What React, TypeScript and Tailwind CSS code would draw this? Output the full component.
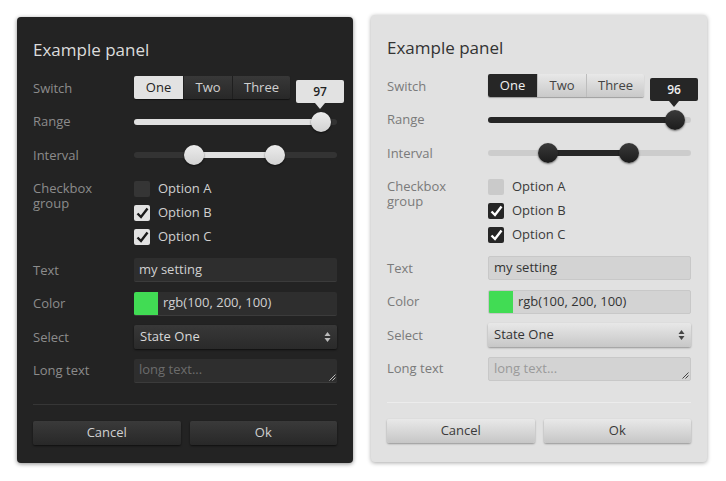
import React from "react";

type Mode = "dark" | "light";

const T = {
  dark: {
    panel: "mt-[17px] h-[446px] bg-[#232323] shadow-[0_1px_4px_rgba(0,0,0,0.45)]",
    title: "text-[#dcdcdc]",
    label: "text-[#8c8c8c]",
    text: "text-[#d0d0d0]",
    segOn: "bg-[#e2e2e2] text-[#222]",
    segOff: "bg-gradient-to-b from-[#383838] to-[#282828] text-[#d0d0d0] border-l border-[#1f1f1f]",
    segWrap: "shadow-[0_1px_1px_rgba(0,0,0,0.5)]",
    tip: "bg-[#e2e2e2] text-[#222]",
    tipArrow: "border-t-[#e2e2e2]",
    trackOff: "bg-[#333333]",
    trackOn: "bg-[#e0e0e0]",
    thumb: "bg-gradient-to-b from-[#ececec] to-[#d2d2d2] shadow-[0_1px_2px_rgba(0,0,0,0.6)]",
    boxOff: "bg-[#353535]",
    boxOn: "bg-[#e2e2e2]",
    check: "#1a1a1a",
    input: "bg-[#2e2e2e] border-b border-[#3b3b3b] text-[#d0d0d0]",
    placeholder: "text-[#6c6c6c]",
    select: "bg-gradient-to-b from-[#383838] to-[#2a2a2a] text-[#d8d8d8] shadow-[0_1px_2px_rgba(0,0,0,0.6)]",
    arrow: "#bbbbbb",
    grip: "#bbbbbb",
    divider: "bg-[#363636]",
    button: "bg-gradient-to-b from-[#3a3a3a] to-[#282828] text-[#d0d0d0] shadow-[0_1px_2px_rgba(0,0,0,0.6)]",
  },
  light: {
    panel: "mt-[15px] h-[447px] bg-[#e1e1e1] shadow-[0_1px_4px_rgba(0,0,0,0.35)]",
    title: "text-[#333]",
    label: "text-[#7a7a7a]",
    text: "text-[#3a3a3a]",
    segOn: "bg-[#262626] text-[#f0f0f0]",
    segOff: "bg-gradient-to-b from-[#e8e8e8] to-[#c9c9c9] text-[#444] border-l border-[#bdbdbd]",
    segWrap: "shadow-[0_1px_1px_rgba(0,0,0,0.3)]",
    tip: "bg-[#262626] text-[#f0f0f0]",
    tipArrow: "border-t-[#262626]",
    trackOff: "bg-[#cccccc]",
    trackOn: "bg-[#262626]",
    thumb: "bg-gradient-to-b from-[#3a3a3a] to-[#1c1c1c] shadow-[0_1px_2px_rgba(0,0,0,0.5)]",
    boxOff: "bg-[#cacaca]",
    boxOn: "bg-[#262626]",
    check: "#ffffff",
    input: "bg-[#d3d3d3] border border-[#c8c8c8] text-[#333]",
    placeholder: "text-[#9a9a9a]",
    select: "bg-gradient-to-b from-[#e8e8e8] to-[#c7c7c7] text-[#333] shadow-[0_1px_2px_rgba(0,0,0,0.35)]",
    arrow: "#444444",
    grip: "#444444",
    divider: "bg-[#d0d0d0] border-b border-[#ececec]",
    button: "bg-gradient-to-b from-[#e9e9e9] to-[#c6c6c6] text-[#3a3a3a] shadow-[0_1px_2px_rgba(0,0,0,0.35)]",
  },
};

function Row({ label, cls, children, top }: { label: string; cls: string; children: React.ReactNode; top?: boolean }) {
  return (
    <div className={"flex " + (top ? "items-start" : "items-center")}>
      <div className={"w-[101px] shrink-0 text-[13px] leading-[15px] " + cls + (top ? " pt-[4px] pr-[30px]" : "")}>{label}</div>
      <div className="w-[203px]">{children}</div>
    </div>
  );
}

function Check({ on, mode }: { on: boolean; mode: Mode }) {
  const t = T[mode];
  return (
    <div className={"flex h-4 w-4 items-center justify-center rounded-[2px] " + (on ? t.boxOn : t.boxOff)}>
      {on && (
        <svg width="13" height="12" viewBox="0 0 13 12">
          <path d="M1.5 6.5 L5 10 L11.5 1.5" fill="none" stroke={t.check} strokeWidth="2.4" strokeLinejoin="miter" />
        </svg>
      )}
    </div>
  );
}

function Panel({ mode, value }: { mode: Mode; value: number }) {
  const t = T[mode];
  const pos = 187; // thumb centre along the 203px track
  return (
    <div className={"flex w-[336px] flex-col rounded-[4px] px-4 " + t.panel}>
      <div className={"pt-[21px] text-[17px] leading-6 " + t.title}>Example panel</div>

      <div className="mt-[14px] flex flex-col gap-[9.5px]">
        <Row label="Switch" cls={t.label}>
          <div className="relative h-6">
            <div className={"flex h-[23px] w-[156px] overflow-hidden rounded-[2px] text-[13px] " + t.segWrap}>
              <div className={"flex w-[49px] items-center justify-center " + t.segOn}>One</div>
              <div className={"flex w-[49px] items-center justify-center " + t.segOff}>Two</div>
              <div className={"flex w-[58px] items-center justify-center " + t.segOff}>Three</div>
            </div>
            <div className="absolute left-[162px] top-[4px] flex flex-col items-center">
              <div className={"flex h-[23px] w-[48px] items-center justify-center rounded-[2px] text-[12px] font-semibold " + t.tip}>
                {value}
              </div>
              <div className={"h-0 w-0 border-x-[5px] border-t-[6px] border-x-transparent " + t.tipArrow} />
            </div>
          </div>
        </Row>

        <Row label="Range" cls={t.label}>
          <div className="relative h-6">
            <div className={"absolute left-0 right-0 top-[9px] h-[6px] rounded-full " + t.trackOff} />
            <div className={"absolute left-0 top-[9px] h-[6px] rounded-full " + t.trackOn} style={{ width: pos }} />
            <div className={"absolute top-[2px] h-5 w-5 rounded-full " + t.thumb} style={{ left: pos - 10 }} />
          </div>
        </Row>

        <Row label="Interval" cls={t.label}>
          <div className="relative h-6">
            <div className={"absolute left-0 right-0 top-[9px] h-[6px] rounded-full " + t.trackOff} />
            <div className={"absolute left-[60px] top-[9px] h-[6px] w-[81px] " + t.trackOn} />
            <div className={"absolute left-[50px] top-[2px] h-5 w-5 rounded-full " + t.thumb} />
            <div className={"absolute left-[131px] top-[2px] h-5 w-5 rounded-full " + t.thumb} />
          </div>
        </Row>

        <Row label="Checkbox group" cls={t.label} top>
          <div className="flex flex-col">
            {[
              ["Option A", false],
              ["Option B", true],
              ["Option C", true],
            ].map(([name, on]) => (
              <div key={name as string} className="flex h-6 items-center gap-[8px]">
                <Check on={on as boolean} mode={mode} />
                <span className={"text-[13px] " + t.text}>{name as string}</span>
              </div>
            ))}
          </div>
        </Row>

        <Row label="Text" cls={t.label}>
          <div className={"flex h-6 items-center rounded-[2px] px-[5px] text-[13px] " + t.input}>my setting</div>
        </Row>

        <Row label="Color" cls={t.label}>
          <div className={"flex h-6 items-center overflow-hidden rounded-[2px] text-[13px] " + t.input}>
            <div className="h-full w-6 bg-[#41dc54]" />
            <span className="pl-[5px]">rgb(100, 200, 100)</span>
          </div>
        </Row>

        <Row label="Select" cls={t.label}>
          <div className={"flex h-6 items-center justify-between rounded-[2px] pl-[6px] pr-[6px] text-[13px] " + t.select}>
            <span>State One</span>
            <svg width="7" height="12" viewBox="0 0 7 12">
              <path d="M3.5 1 L6.5 5 L0.5 5 Z M0.5 7 L6.5 7 L3.5 11 Z" fill={t.arrow} />
            </svg>
          </div>
        </Row>

        <Row label="Long text" cls={t.label}>
          <div className={"relative flex h-6 items-center rounded-[2px] px-[5px] text-[13px] " + t.input}>
            <span className={t.placeholder}>long text...</span>
            <svg className="absolute bottom-[1px] right-[1px]" width="7" height="7" viewBox="0 0 7 7">
              <path d="M6.5 0.5 L0.5 6.5 M6.5 3.5 L3.5 6.5" stroke={t.grip} strokeWidth="1" />
            </svg>
          </div>
        </Row>
      </div>

      <div className={"mt-[21px] h-px " + t.divider} />

      <div className="mt-[16px] grid grid-cols-2 gap-[9px]">
        <button className={"h-6 rounded-[2px] text-[13px] " + t.button}>Cancel</button>
        <button className={"h-6 rounded-[2px] text-[13px] " + t.button}>Ok</button>
      </div>
    </div>
  );
}

export default function App() {
  return (
    <div className="flex h-[481px] w-[726px] items-start gap-[18px] bg-white pl-[17px] font-['Open_Sans',sans-serif]">
      <Panel mode="dark" value={97} />
      <Panel mode="light" value={96} />
    </div>
  );
}
